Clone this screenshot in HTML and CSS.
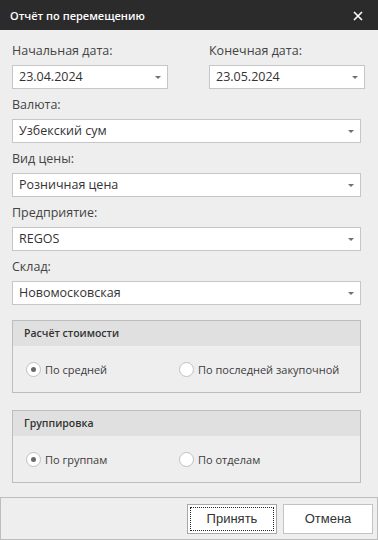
FILE: index.html
```html
<!DOCTYPE html>
<html lang="ru">
<head>
    <meta charset="UTF-8">
    <meta name="viewport" content="width=device-width, initial-scale=1.0">
    <title>Отчёт по перемещению</title>
    <link rel="stylesheet" href="styles.css">
</head>
<body>
    <div class="dialog">
        <!-- Title bar -->
        <div class="titlebar">
            <span class="title">Отчёт по перемещению</span>
            <span class="close">
                <svg width="10" height="10" viewBox="0 0 10 10">
                    <path d="M1 1 L9 9 M9 1 L1 9" stroke="#fff" stroke-width="1.6" fill="none"/>
                </svg>
            </span>
        </div>

        <!-- Form -->
        <div class="content">
            <div class="date-row">
                <div class="field">
                    <div class="label">Начальная дата:</div>
                    <div class="select">23.04.2024<span class="caret"></span></div>
                </div>
                <div class="field">
                    <div class="label">Конечная дата:</div>
                    <div class="select">23.05.2024<span class="caret"></span></div>
                </div>
            </div>

            <div class="field">
                <div class="label">Валюта:</div>
                <div class="select">Узбекский сум<span class="caret"></span></div>
            </div>
            <div class="field">
                <div class="label">Вид цены:</div>
                <div class="select">Розничная цена<span class="caret"></span></div>
            </div>
            <div class="field">
                <div class="label">Предприятие:</div>
                <div class="select">REGOS<span class="caret"></span></div>
            </div>
            <div class="field">
                <div class="label">Склад:</div>
                <div class="select">Новомосковская<span class="caret"></span></div>
            </div>

            <div class="group">
                <div class="group-header">Расчёт стоимости</div>
                <div class="group-body">
                    <div class="radio checked"><span class="dot"></span>По средней</div>
                    <div class="radio"><span class="dot"></span>По последней закупочной</div>
                </div>
            </div>

            <div class="group">
                <div class="group-header">Группировка</div>
                <div class="group-body">
                    <div class="radio checked"><span class="dot"></span>По группам</div>
                    <div class="radio"><span class="dot"></span>По отделам</div>
                </div>
            </div>
        </div>

        <!-- Buttons -->
        <div class="footer">
            <button class="btn primary"><span>Принять</span></button>
            <button class="btn">Отмена</button>
        </div>
    </div>
</body>
</html>
```

FILE: styles.css
```css
/* General */
body {
    margin: 0;
    font-family: "Open Sans", "Noto Sans", sans-serif;
    background-color: #eeeeee;
    color: #3c3c3c;
}

.dialog {
    width: 378px;
    height: 540px;
    display: flex;
    flex-direction: column;
    background-color: #eeeeee;
    overflow: hidden;
}

/* Title bar */
.titlebar {
    height: 30px;
    flex-shrink: 0;
    display: flex;
    align-items: center;
    justify-content: space-between;
    padding: 0 15px 0 10px;
    background-color: #2b2b2b;
    color: #ffffff;
}

.title {
    font-size: 11px;
    font-weight: 600;
}

.close {
    display: flex;
    margin-top: 1px;
}

/* Form */
.content {
    flex: 1;
    padding: 12px 17px 0 12px;
    display: flex;
    flex-direction: column;
}

.date-row {
    display: grid;
    grid-template-columns: 156px 156px;
    justify-content: space-between;
    margin-right: -4px;
}

.field {
    margin-bottom: 7px;
}

.label {
    font-size: 12.5px;
    line-height: 18px;
    margin-bottom: 5px;
    color: #444444;
}

.select {
    position: relative;
    height: 24px;
    box-sizing: border-box;
    border: 1px solid #c6c6c6;
    background-color: #ffffff;
    padding: 0 20px 0 6px;
    font-size: 12.5px;
    line-height: 22px;
    color: #333333;
}

.caret {
    position: absolute;
    right: 6px;
    top: 10px;
    border-left: 3px solid transparent;
    border-right: 3px solid transparent;
    border-top: 3px solid #707070;
}

/* Groups */
.group {
    border: 1px solid #bdbdbd;
    margin-top: 8px;
    margin-bottom: 9px;
}

.group-header {
    height: 25px;
    line-height: 25px;
    background-color: #e0e0e0;
    padding-left: 11px;
    font-size: 10.5px;
    font-weight: 600;
    color: #333333;
}

.group-body {
    height: 46px;
    display: grid;
    grid-template-columns: 153px 1fr;
    align-items: center;
    padding-left: 13px;
}

.radio {
    display: flex;
    align-items: center;
    font-size: 11px;
    color: #3c3c3c;
}

.radio .dot {
    width: 15px;
    height: 15px;
    box-sizing: border-box;
    border: 1px solid #c0c0c0;
    border-radius: 50%;
    background-color: #ffffff;
    margin-right: 4px;
    display: flex;
    align-items: center;
    justify-content: center;
}

.radio.checked .dot::after {
    content: "";
    width: 5px;
    height: 5px;
    border-radius: 50%;
    background-color: #6a6a6a;
}

/* Footer */
.footer {
    height: 43px;
    flex-shrink: 0;
    box-sizing: border-box;
    border: 1px solid #bdbdbd;
    display: flex;
    justify-content: flex-end;
    align-items: center;
    gap: 6px;
    padding: 0 4px 0 0;
}

.btn {
    width: 90px;
    height: 30px;
    background-color: #ffffff;
    border: 1px solid #c2c2c2;
    font-family: "Liberation Sans", Arial, sans-serif;
    font-size: 13px;
    color: #333333;
    padding: 0;
}

.btn.primary {
    border-color: #a8a8a8;
    padding: 2px;
}

.btn.primary span {
    display: flex;
    align-items: center;
    justify-content: center;
    height: 100%;
    box-sizing: border-box;
    border: 1px dotted #222222;
}
```
